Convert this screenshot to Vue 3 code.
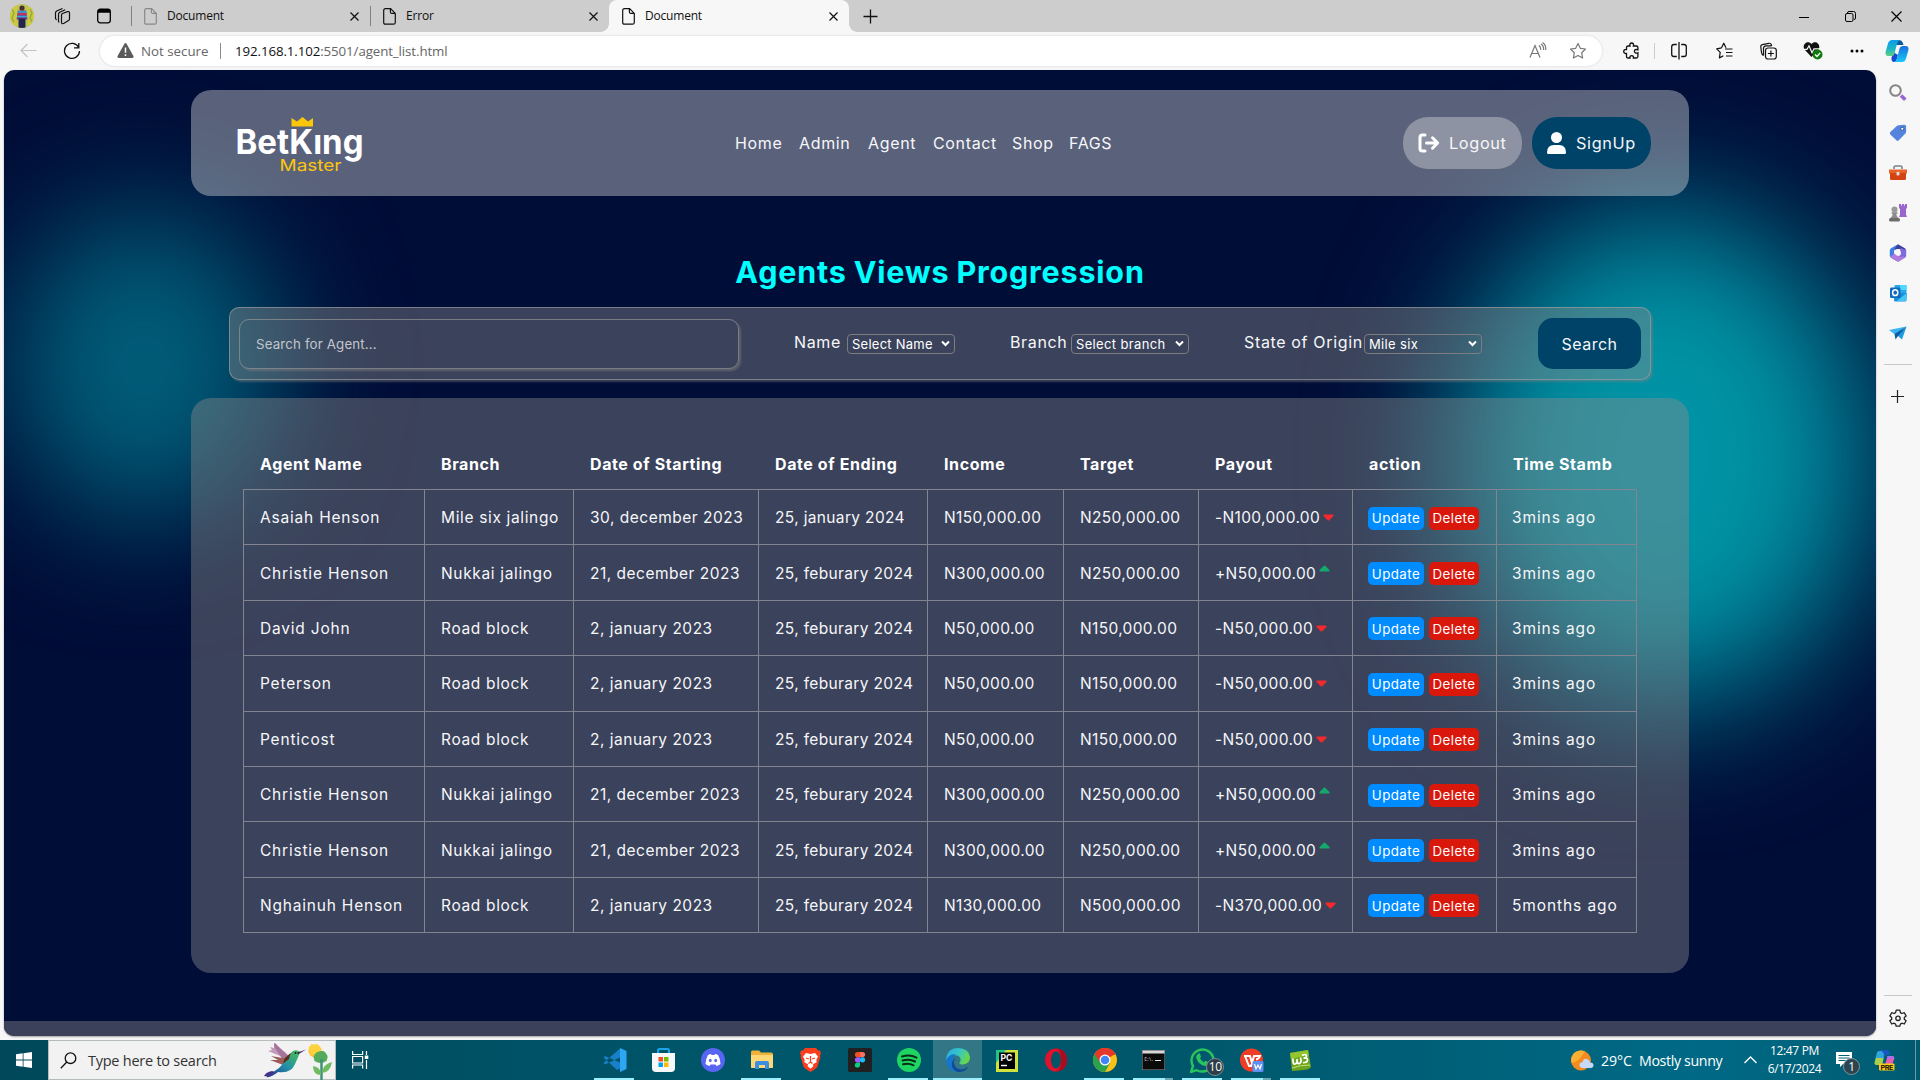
<script setup>
const tabs = [
  { title: 'Document', dim: true },
  { title: 'Error' },
  { title: 'Document', active: true },
]
const nav = [
  ['Home', 49], ['Admin', 54], ['Agent', 50], ['Contact', 64], ['Shop', 42], ['FAGS', 43],
]
const columns = ['Agent Name', 'Branch', 'Date of Starting', 'Date of Ending', 'Income', 'Target', 'Payout', 'action', 'Time Stamb']
const mk = (name, branch, start, end, income, target, payout, time) => ({ name, branch, start, end, income, target, payout, time, up: payout[0] === '+' })
const christie = () => mk('Christie Henson', 'Nukkai jalingo', '21, december 2023', '25, feburary 2024', 'N300,000.00', 'N250,000.00', '+N50,000.00', '3mins ago')
const road = (name) => mk(name, 'Road block', '2, january 2023', '25, feburary 2024', 'N50,000.00', 'N150,000.00', '-N50,000.00', '3mins ago')
const rows = [
  mk('Asaiah Henson', 'Mile six jalingo', '30, december 2023', '25, january 2024', 'N150,000.00', 'N250,000.00', '-N100,000.00', '3mins ago'),
  christie(),
  road('David John'),
  road('Peterson'),
  road('Penticost'),
  christie(),
  christie(),
  mk('Nghainuh Henson', 'Road block', '2, january 2023', '25, feburary 2024', 'N130,000.00', 'N500,000.00', '-N370,000.00', '5months ago'),
]
</script>

<template>
  <div class="screen">
    <header class="tabstrip">
      <div class="slot w44">
        <svg width="24" height="24" viewBox="0 0 24 24"><defs><clipPath id="av"><circle cx="12" cy="12" r="12" /></clipPath></defs><g clip-path="url(#av)"><rect width="24" height="24" fill="#b9c45c" /><path d="M0 0h7v24H0zM18 3h6v18h-6z" fill="#d0c93c" /><path d="M2 5l2 4-2 5 2 4M20 5l2 4-2 5 2 4" stroke="#8fae45" stroke-width="1.500" fill="none" /><circle cx="12" cy="4" r="2.600" fill="#4a2f2a" /><path d="M8 6.500h8l1.500 9h-11z" fill="#7a3b9c" /><path d="M7.500 8h9M7 12.500h10" stroke="#2bb0d8" stroke-width="1.500" /><path d="M7.500 10h9" stroke="#d8324b" stroke-width="1.500" /><path d="M8.500 14.500h7V24h-7z" fill="#24244c" /></g></svg>
      </div>
      <div class="slot w36">
        <svg width="17" height="17" viewBox="0 0 17 17" fill="none" stroke="#111" stroke-width="1.200"><path d="M7.500 7q0-1 1-1.500l5-1.900q2-.5 2 1.400v6q0 1-1 1.500l-4.500 2.800q-2.500 1.200-2.500-1z" /><path d="M5.200 14.500l-.7-1V6.500q0-1.500 1.200-2.200l5.500-2.600M2.600 12L1.500 10.500V5q0-1.300 1.200-2L8.500.500" /></svg>
      </div>
      <div class="slot w48">
        <svg width="14" height="16" viewBox="0 0 14 16"><rect x=".7" y="1.200" width="12.600" height="13.600" rx="2.500" fill="none" stroke="#000" stroke-width="1.300" /><path d="M1 4.800V3a2 2 0 012-2h8a2 2 0 012 2v1.800z" /></svg>
      </div>
      <div class="tabs">
        <div v-for="(t, i) in tabs" :key="i" class="tab" :class="{ active: t.active }">
          <svg width="13" height="17" viewBox="0 0 13 17" fill="none" :stroke="t.dim ? '#888' : '#111'" stroke-width="1.200"><path d="M.7 2.500Q.7.700 2.400.7h5.200l4.700 4.700v9q0 1.800-1.800 1.800H2.400Q.7 16.200.7 14.400zM7.400.7v3.200q0 1.500 1.500 1.500h3.400" /></svg>
          <span>{{ t.title }}</span>
          <svg class="x" width="9" height="9" viewBox="0 0 9 9" stroke="#111" stroke-width="1.200"><path d="M.5.500l8 8M8.500.500l-8 8" /></svg>
        </div>
      </div>
      <div class="slot w42"><svg width="15" height="15" viewBox="0 0 15 15" stroke="#111" stroke-width="1.300"><path d="M7.500.500v14M.5 7.500h14" /></svg></div>
      <div class="winbtns">
        <svg width="11" height="11" viewBox="0 0 11 11" stroke="#000" fill="none"><path d="M0 6.500h10" /></svg>
        <svg width="11" height="11" viewBox="0 0 11 11" stroke="#000" fill="none"><rect x=".5" y="2.500" width="7.500" height="8" rx="1.500" /><path d="M2.500 2q0-1.500 1.500-1.500h4.500q2 0 2 2v4.500q0 1.500-1.500 1.500" /></svg>
        <svg width="11" height="11" viewBox="0 0 11 11" stroke="#000" fill="none" stroke-width="1.200"><path d="M.5.500l10 10M10.500.500l-10 10" /></svg>
      </div>
    </header>

    <div class="toolbar">
      <div class="slot w56"><svg width="17" height="15" viewBox="0 0 17 15" fill="none" stroke="#c3c3c3" stroke-width="1.200"><path d="M16.500 7.500H1M7.500 1L1 7.500 7.500 14" /></svg></div>
      <div class="slot w32"><svg width="18" height="18" viewBox="0 0 18 18" fill="none" stroke="#111" stroke-width="1.300"><path d="M15.700 5.500A7.500 7.500 0 1016.500 9M15.800 1v4.800H11" /></svg></div>
      <div class="omni">
        <svg width="17" height="15" viewBox="0 0 17 15"><path d="M7.300 1Q8.500-.8 9.700 1l6.700 12q.7 1.700-1 2H1.600q-1.700-.3-1-2z" fill="#5a5a5a" /><path d="M8.500 4.500v5.300M8.500 11.200v1.700" stroke="#fff" stroke-width="1.500" /></svg>
        <span class="ns">Not secure</span><i class="vline"></i><span class="url"><b>192.168.1.102</b>:5501/agent_list.html</span>
        <div class="omni-icons">
          <svg width="18" height="17" viewBox="0 0 18 17" fill="none" stroke="#777" stroke-width="1.200"><path d="M1 15.500L6 3.500l5 12M2.800 11.500h6.500M10 3.500q2 1.500 1.800 4.500M12 2q3 2 2.600 6M13.500.600q3.700 2.500 3.300 7.400" /></svg>
          <svg width="18" height="18" viewBox="0 0 18 18" fill="none" stroke="#777" stroke-width="1.200"><path d="M9 1.500l2.300 4.800 5.200.7-3.800 3.700.9 5.300L9 13.500 4.400 16l.9-5.300L1.500 7l5.200-.7z" stroke-linejoin="round" /></svg>
        </div>
      </div>
      <div class="tools">
        <div class="slot t1"><svg width="17" height="18" viewBox="0 0 17 18" fill="none" stroke="#111" stroke-width="1.300"><path d="M3.500 5.500q0-1.500 1.500-1.500h2c-.7-2 .5-3 1.700-3s2.400 1 1.700 3h3q1.500 0 1.500 1.500v2.300c-2-.8-3.500 0-3.500 1.500s1.500 2.300 3.500 1.500v3.700q0 1.500-1.500 1.500h-3c.4-1.500-.5-2.300-1.700-2.300S6.600 14.500 7 16H5q-1.500 0-1.500-1.500v-3C1.700 11.800.7 10.600.7 9.400s1-2.200 2.800-1.900z" /></svg></div>
        <i class="vline g"></i>
        <div class="slot t2"><svg width="16" height="18" viewBox="0 0 16 18" fill="none" stroke="#111" stroke-width="1.300"><path d="M5.800 2.500H3Q.7 2.500.7 4.800v7.400q0 2.300 2.300 2.300h2.800M10.200 2.500H13q2.300 0 2.300 2.300v7.400q0 2.300-2.300 2.300h-2.800M8 0v17.500" /></svg></div>
        <div class="slot t3"><svg width="17" height="18" viewBox="0 0 17 18" fill="none" stroke="#111" stroke-width="1.200" stroke-linejoin="round"><path d="M10 5.800L7.800 1.200 5.500 5.800.7 6.800l3.500 3.600-.8 5.500 4-2.200M9 7h7.500M10 10.500h6.500M10 14h6.500" /></svg></div>
        <div class="slot t3"><svg width="17" height="18" viewBox="0 0 17 18" fill="none" stroke="#111" stroke-width="1.200"><rect x="5.500" y="6" width="10.800" height="11" rx="2.500" /><path d="M10.900 8.500v6M7.900 11.500h6M3.500 13.500Q1.800 12.500 1.500 10.500L.8 5Q.6 3 2.300 2.700l6.500-1.400q2-.3 2.600 1.500l.3 1M3.500 13.500V6.500q0-2.500 2.500-2.700h5.500" /></svg></div>
        <div class="slot t3"><svg width="20" height="19" viewBox="0 0 20 19"><path d="M8.500 16L1.500 8.500C-1.500 4 4.500-1.500 8.500 3c4-4.500 10 1 7 5.500z" fill="#111" /><path d="M0 8.300h4l2-3.500 3 7 2-4h6" stroke="#f7f7f7" stroke-width="1.200" fill="none" /><circle cx="14.500" cy="13.500" r="5" fill="#0f7b0f" /><path d="M12 13.500l2 2 3.200-3.600" stroke="#fff" stroke-width="1.300" fill="none" /></svg></div>
        <div class="slot t3 dots"><svg width="14" height="4" viewBox="0 0 14 4"><circle cx="2" cy="2" r="1.500" /><circle cx="7" cy="2" r="1.500" /><circle cx="12" cy="2" r="1.500" /></svg></div>
        <div class="slot t4">
          <svg width="24" height="24" viewBox="0 0 24 24"><defs><linearGradient id="cpa" x1="0" y1="0" x2="0" y2="1"><stop offset="0" stop-color="#0a9de8" /><stop offset=".55" stop-color="#1bb5c9" /><stop offset="1" stop-color="#5ed27c" /></linearGradient><linearGradient id="cpb" x1="0" y1="0" x2="0" y2="1"><stop offset="0" stop-color="#1f6fdc" /><stop offset="1" stop-color="#14c8f7" /></linearGradient></defs><path d="M14 1q3 0 3.700 2.500l.8 2.500h-8l2-4z" fill="#0b5a9c" /><path d="M6.500 19L8 13l5 3-1.500 5q-.7 2.500-3 2T6.500 19z" fill="#164ad0" /><path d="M7 1h8q-2 0-2.800 3L9.500 14.500Q9 17 6.500 17H3.500Q-.3 17 .7 12.500L3 4.500Q4 1 7 1z" fill="url(#cpa)" /><path d="M17 23H9q2 0 2.800-3l2.700-10.500Q15 7 17.500 7h3q3.800 0 2.800 4.500L21 19.500q-1 3.500-4 3.500z" fill="url(#cpb)" /></svg>
        </div>
      </div>
    </div>

    <div class="body">
      <main class="page">
        <div class="glow left"></div>
        <div class="glow right"></div>

        <section class="topbar">
          <svg class="logo" width="140" height="66" viewBox="0 0 140 66">
            <path d="M59.500 9l5.500 3.500 5.500-4.500 5.500 4.500 5-3.500v8.500H59.500z" fill="#fdc60b" />
            <text x="3.500" y="45" textLength="128" lengthAdjust="spacingAndGlyphs" class="lg">BetKıng</text>
            <text x="47.500" y="61.500" textLength="62" lengthAdjust="spacingAndGlyphs" class="ms">Master</text>
          </svg>
          <nav><a v-for="n in nav" :key="n[0]" :style="{ width: n[1] + 'px' }">{{ n[0] }}</a></nav>
          <div class="auth">
            <button class="logout"><svg width="22" height="20" viewBox="0 0 22 20" fill="none" stroke="#fff" stroke-width="3" stroke-linecap="round" stroke-linejoin="round"><path d="M7 2H4.500Q2 2 2 4.500v11Q2 18 4.500 18H7M8.500 10h11M14.500 4.800l5.200 5.200-5.200 5.200" /></svg>Logout</button>
            <button class="signup"><svg width="19" height="22" viewBox="0 0 19 22" fill="#fff"><circle cx="9.500" cy="5.500" r="5.500" /><path d="M0 20.500Q0 13 7 13h5q7 0 7 7.500 0 1.500-1.500 1.500h-16Q0 22 0 20.500z" /></svg>SignUp</button>
          </div>
        </section>

        <h1>Agents Views Progression</h1>

        <section class="searchbar">
          <div class="input">Search for Agent...</div>
          <div class="field f1"><label>Name</label><div class="select">Select Name<svg width="9" height="7" viewBox="0 0 9 7"><path d="M1 1.500l3.500 3.500L8 1.500" fill="none" stroke="#fff" stroke-width="2" /></svg></div></div>
          <div class="field f2"><label>Branch</label><div class="select">Select branch<svg width="9" height="7" viewBox="0 0 9 7"><path d="M1 1.500l3.500 3.500L8 1.500" fill="none" stroke="#fff" stroke-width="2" /></svg></div></div>
          <div class="field f3"><label>State of Origin</label><div class="select">Mile six<svg width="9" height="7" viewBox="0 0 9 7"><path d="M1 1.500l3.500 3.500L8 1.500" fill="none" stroke="#fff" stroke-width="2" /></svg></div></div>
          <button class="go">Search</button>
        </section>

        <section class="panel">
          <div class="row head"><div v-for="c in columns" :key="c">{{ c }}</div></div>
          <div class="table">
            <div v-for="(r, i) in rows" :key="i" class="row">
              <div class="nm">{{ r.name }}</div>
              <div class="br">{{ r.branch }}</div>
              <div class="ds">{{ r.start }}</div>
              <div>{{ r.end }}</div>
              <div>{{ r.income }}</div>
              <div>{{ r.target }}</div>
              <div>{{ r.payout }}<svg :class="{ up: r.up }" width="11" height="7" viewBox="0 0 11 7"><path v-if="r.up" d="M5.500.500q.5 0 1 .5l4 4q.5 1.500-.7 1.500H1.200Q0 6.500.5 5l4-4q.5-.5 1-.5z" fill="#15a86c" /><path v-else d="M5.500 6.500q-.5 0-1-.5l-4-4Q0 .5 1.200.500h8.600q1.200 0 .7 1.500l-4 4q-.5.5-1 .5z" fill="#f5282d" /></svg></div>
              <div class="acts"><span class="upd">Update</span><span class="del">Delete</span></div>
              <div class="tm">{{ r.time }}</div>
            </div>
          </div>
        </section>
        <div class="pagefoot"></div>
      </main>

      <aside class="side">
        <div class="slot s"><svg width="18" height="18" viewBox="0 0 18 18" fill="none"><circle cx="6.500" cy="6.500" r="5.300" stroke="#858585" stroke-width="2" /><path d="M12 11.500l4.300 4.300" stroke="#9a63d2" stroke-width="3.600" /></svg></div>
        <div class="slot s"><svg width="18" height="18" viewBox="0 0 18 18"><path d="M9.500 1.200l6-.4q1.600 0 1.600 1.600v5.400q0 1-.7 1.700l-6.600 6.800q-1.200 1.200-2.400 0L1.300 10.500q-1-1.200 0-2.400l6.500-6.200q.7-.7 1.700-.7z" fill="#5584dc" /><circle cx="13.300" cy="4.800" r="1.600" fill="#fff" stroke="#274b92" stroke-width=".9" /></svg></div>
        <div class="slot s"><svg width="18" height="16" viewBox="0 0 18 16"><path d="M5 4V2.500Q5 1 6.500 1h5Q13 1 13 2.500V4" fill="none" stroke="#7b8288" stroke-width="1.600" /><path d="M0 4.500h18v4H0z" fill="#e8622a" /><path d="M1 8h16v5.500Q17 15 15.500 15h-13Q1 15 1 13.500z" fill="#d44413" /><rect x="7.500" y="6.800" width="3" height="3.800" rx="1" fill="#d9dee2" /></svg></div>
        <div class="slot s"><svg width="18" height="18" viewBox="0 0 18 18"><path d="M10 0h2v1.500h1V0h2v1.500h1V0h2v4l-1 1v5.500l1 2.500h-8l1-2.500V5l-1-1z" fill="#9b66cc" /><circle cx="5.500" cy="5.500" r="3" fill="#9a9a9a" /><path d="M2.500 8.300h6v1.500H7.300q0 2.700 2.200 4.200h-8q2.200-1.500 2.200-4.200H2.500z" fill="#8b8b8b" /><rect y="14" width="11" height="3.500" rx="1.500" fill="#6d6d6d" /></svg></div>
        <div class="slot s"><svg width="18" height="18" viewBox="0 0 18 18"><path d="M8.500.500L2 4.300Q.8 5 .8 6.500v5q0 1.500 1.200 2.200l3 1.500V6.500L12 3z" fill="#3e7fe0" /><path d="M9 .300l6.500 3.800Q17 5 17 6.500v4L11.500 7.500V5L5.500 5z" fill="#3f3fa0" /><path d="M17.200 6v5.500q0 1.500-1.200 2.200l-6 3.600q-1 .6-2 0L3 14.500l8.500-3.500V4z" fill="#7d6cdd" /><path d="M1.200 12.800L5.500 9.500l5.500 3.300 5.500-.3-6.500 4.800q-1 .6-2 0z" fill="#b07bdc" /><circle cx="9" cy="8.800" r="2.900" fill="#f7f7f7" /></svg></div>
        <div class="slot s"><svg width="17" height="18" viewBox="0 0 17 18"><rect x="4.500" y="1" width="12" height="12" rx="1" fill="#28a8ea" /><path d="M10 1h6.500v5H10z" fill="#50d9ff" /><path d="M4 9l12.500 0v7q0 1.500-1.500 1.500H5.500Q4 17.500 4 16z" fill="#1490df" /><path d="M16.500 9L7 17h8q1.500 0 1.500-1.500z" fill="#43c6f5" /><rect x="0" y="3.500" width="10.500" height="10.500" rx="1.200" fill="#0f6cbd" /><ellipse cx="5.200" cy="8.700" rx="2.600" ry="2.900" fill="none" stroke="#fff" stroke-width="1.500" /></svg></div>
        <div class="slot s"><svg width="18" height="15" viewBox="0 0 18 15"><path d="M0 4L17.500.500 6 8.500z" fill="#35b4f0" /><path d="M17.500.500L13 13.500 8.500 9.500z" fill="#1b9be6" /><path d="M17.500.500L5.500 8l1 5.500 2.500-3.500z" fill="#0d5d9e" /></svg></div>
        <i class="hline"></i>
        <div class="slot add"><svg width="13" height="13" viewBox="0 0 13 13" stroke="#222" stroke-width="1.200"><path d="M6.500 0v13M0 6.500h13" /></svg></div>
        <i class="hline low"></i>
        <div class="slot gear"><svg width="18" height="18" viewBox="0 0 18 18" fill="none" stroke="#222" stroke-width="1.300"><path d="M7.200 1.200h3.600l.6 2.400 1.500.9 2.400-.8 1.800 3.200-1.800 1.600v1.700l1.800 1.600-1.800 3.200-2.400-.8-1.500.9-.6 2.100H7.200l-.6-2.100-1.500-.9-2.400.8L.9 11.800l1.800-1.600V8.500L.9 6.900l1.800-3.200 2.400.8 1.500-.9z" stroke-linejoin="round" /><circle cx="9" cy="9.300" r="2.200" /></svg></div>
      </aside>
    </div>

    <footer class="taskbar">
      <div class="slot start"><svg width="16" height="16" viewBox="0 0 16 16" fill="#fff"><path d="M0 2.300L6.700 1.300v6.300H0zM7.500 1.200L16 0v7.600H7.500zM0 8.400h6.700v6.300L0 13.700zM7.500 8.400H16V16l-8.500-1.200z" /></svg></div>
      <div class="wsearch">
        <svg width="17" height="17" viewBox="0 0 17 17" fill="none" stroke="#111" stroke-width="1.300"><circle cx="10.500" cy="6.200" r="5.300" /><path d="M6.800 10L.8 16.200" /></svg>
        <span>Type here to search</span>
        <svg class="bird" width="72" height="38" viewBox="0 0 72 38">
          <defs><linearGradient id="bd" x1="1" y1="0" x2="0" y2="1"><stop offset="0" stop-color="#4fc04d" /><stop offset=".5" stop-color="#2291a8" /><stop offset="1" stop-color="#2b2c8c" /></linearGradient></defs>
          <path d="M27 18L5 9l4-1-2-3 4 1 0-4 11 8 8 8z" fill="#c29ab9" /><path d="M29 18L12 1q-2 0 0 5l8 12z" fill="#a5739c" /><path d="M20 23l-13-5 8 0-7-4 18 3z" fill="#9a5d5a" /><path d="M30 10q-10 4-10 14l10-6z" fill="#5a2f18" />
          <path d="M37 10q-3-3-7-1-3 2-4 8-6 4-10 9L3 35q5 1 12-5 13 2 17-8 3-6 5-12z" fill="url(#bd)" /><path d="M1 34q2-4 8-5l3 1q-6 5-11 4z" fill="#45318c" /><path d="M34 10.500q4-1 9-3l-8 5z" fill="#42246b" /><circle cx="32.500" cy="11" r="1" fill="#14242a" />
          <circle cx="52" cy="9" r="6.500" fill="#fbc22d" /><path d="M45.500 6l3-4 3 1 3-1 4 5-2 4-8 2z" fill="#ffd13b" /><path d="M50.500 15q2-7 10-6 6 4 3 10-6 4-12 0z" fill="#55ab5c" /><path d="M58.500 17v21" stroke="#3f9278" stroke-width="2.500" /><path d="M58 33q-8 0-8-9 8 1 8 9zM59 31q8 0 10-11-9 2-10 11z" fill="#71bb62" />
        </svg>
      </div>
      <div class="slot tv"><svg width="17" height="18" viewBox="0 0 17 18" fill="none" stroke="#fff" stroke-width="1.200"><path d="M.6 0v3.500h10V0M.6 17.500V14h10v3.500M.6 5.500h10v6.500H.6zM14.500 0v4M14.500 9v9" /><path d="M12.800 4.500h3.500V8h-3.500z" fill="#fff" stroke="none" /></svg></div>

      <div class="apps">
        <div class="app run"><svg width="24" height="24" viewBox="0 0 24 24"><path d="M2 8L.5 9.500 14 22l4-2V15zM2 16.500L.5 15 17 .5l1 8.500z" fill="#1780c8" /><path d="M17 0l6.500 3v18L17 24z" fill="#2ca7f3" /></svg></div>
        <div class="app"><svg width="23" height="24" viewBox="0 0 23 24"><path d="M6 6V2.500Q6 1 7.500 1h8Q17 1 17 2.500V6" fill="none" stroke="#1aa5e8" stroke-width="2" /><path d="M0 5h23v15q0 4-4 4H4q-4 0-4-4z" fill="#f7f8fa" /><path d="M6.500 9h4.500v4.500H6.500z" fill="#f25022" /><path d="M12 9h4.500v4.500H12z" fill="#7fba00" /><path d="M6.500 14.500h4.500V19H6.500z" fill="#00a4ef" /><path d="M12 14.500h4.500V19H12z" fill="#ffb900" /></svg></div>
        <div class="app"><svg width="24" height="24" viewBox="0 0 24 24"><circle cx="12" cy="12" r="12" fill="#5865f2" /><path d="M7 7q2-1 3-1l.5 1h3l.5-1q1 0 3 1 2.500 4 2.500 9-2 1.700-4 2l-1-1.500H9.500L8.500 18q-2-.3-4-2Q4.500 11 7 7z" fill="#fff" /><ellipse cx="9.300" cy="12.500" rx="1.400" ry="1.700" fill="#5865f2" /><ellipse cx="14.700" cy="12.500" rx="1.400" ry="1.700" fill="#5865f2" /></svg></div>
        <div class="app run"><svg width="22" height="20" viewBox="0 0 22 20"><path d="M0 2q0-1.500 1.500-1.500H8l2 2h10q2 0 2 1.500v13q0 1-1 1H1q-1 0-1-1z" fill="#f0b03a" /><path d="M0 5h22v12q0 1-1 1H1q-1 0-1-1z" fill="#ffd775" /><path d="M4 19v-6q0-2 2-2h10q2 0 2 2v6h-4v-4H8v4z" fill="#3b8ee0" /></svg></div>
        <div class="app"><svg width="21" height="24" viewBox="0 0 21 24"><path d="M5 0h11l2 2.500h2l1 3-1 2 .5 1-3 10Q17 20 10.500 24 4 20 3.500 18.500L.5 8.500l.5-1-1-2 1-3h2z" fill="#fb3c1d" /><path d="M6 5l4.500 1L15 5l3 3.500-1.800 3.500.6 2-4 2.500.7 1.500-3 2.700-3-2.700.7-1.500-4-2.500.6-2L3 8.500z" fill="#fff" /><path d="M6 10l3 1M15 10l-3 1M10.500 8v6l-2 1.500M10.500 14l2 1.500" stroke="#fb3c1d" stroke-width="1.300" fill="none" /></svg></div>
        <div class="app"><svg width="24" height="24" viewBox="0 0 24 24"><rect width="24" height="24" rx="1.500" fill="#202020" /><path d="M12 4H9.500a2.600 2.600 0 000 5.200H12z" fill="#f24e1e" /><path d="M12 4h2.500a2.600 2.600 0 010 5.200H12z" fill="#ff7262" /><path d="M12 9.200H9.500a2.600 2.600 0 000 5.200H12z" fill="#a259ff" /><circle cx="14.500" cy="11.800" r="2.600" fill="#1abcfe" /><path d="M12 14.400H9.500A2.600 2.600 0 1012 17z" fill="#0acf83" /></svg></div>
        <div class="app run"><svg width="24" height="24" viewBox="0 0 24 24"><circle cx="12" cy="12" r="12" fill="#1fd562" /><path d="M5 8.500q8-2.500 14.500 1.200M5.500 12.500q7-2 12.500 1M6 16.300q6-1.500 10.500 1" fill="none" stroke="#0b2c16" stroke-width="2" stroke-linecap="round" /></svg></div>
        <div class="app run cur"><svg width="24" height="24" viewBox="0 0 24 24"><defs><linearGradient id="eg" x1="0" y1="0" x2="1" y2=".4"><stop offset="0" stop-color="#29a9dd" /><stop offset=".55" stop-color="#36c5c9" /><stop offset="1" stop-color="#66d84c" /></linearGradient></defs><path d="M0 12Q1 0 12 0q11 .5 12 9 0 7-7 7.500-4 0-3.500-2 2-2 .5-5Q10 4 0 12z" fill="url(#eg)" /><path d="M0 12Q4 5 10 6.500q-4 2-3 9 2 7 13 5-4 4-9 3.500Q.5 22.500 0 12z" fill="#1576cf" /><path d="M9.500 10q-4 5 1 10 5 3.500 12-1.500-3.500 6-11 5.500Q5 21 6 15q1-4 3.500-5z" fill="#114b93" /></svg></div>
        <div class="app"><svg width="22" height="23" viewBox="0 0 22 23"><path d="M0 1h22v22H0z" fill="#cfe33c" /><path d="M0 1h10L0 14z" fill="#21c58a" /><path d="M3 3.500h16v16.500H3z" fill="#000" /><text x="4.500" y="11.500" textLength="12" lengthAdjust="spacingAndGlyphs" class="pc">PC</text><path d="M5 16.500h6" stroke="#fff" stroke-width="1.400" /></svg></div>
        <div class="app"><svg width="24" height="24" viewBox="0 0 24 24"><ellipse cx="12" cy="12" rx="11" ry="11.500" fill="#e0122c" /><ellipse cx="12" cy="12" rx="5" ry="8.500" fill="#035466" /><path d="M12 .5q11 1 11 11.500T12 23.500q5-1 5-11.500T12 .5z" fill="#a90c20" /></svg></div>
        <div class="app run"><svg width="24" height="24" viewBox="0 0 24 24"><circle cx="12" cy="12" r="12" fill="#fbc116" /><path d="M12 12L1.600 6A12 12 0 0122.400 6z" fill="#e5382b" /><path d="M12 12L1.600 6A12 12 0 0012 24l5-9z" fill="#2ba24c" /><path d="M12 6.500h10.700A12 12 0 0012 .01 12 12 0 001.600 6L7 14.500z" fill="#e5382b" /><circle cx="12" cy="12" r="5.500" fill="#fff" /><circle cx="12" cy="12" r="4.300" fill="#4285f4" /></svg></div>
        <div class="app run multi"><svg width="23" height="20" viewBox="0 0 23 20"><path d="M0 0h23v20H0z" fill="#0b0b0b" stroke="#999" /><path d="M.5.500h22v3H.5z" fill="#d8d8d8" /><text x="2.500" y="11" textLength="9" lengthAdjust="spacingAndGlyphs" class="cm">C:\.</text><path d="M13 10.500h6" stroke="#eee" /></svg></div>
        <div class="app run wa"><svg width="26" height="25" viewBox="0 0 26 25"><path d="M1 24l2-6A11 11 0 1112 23.500a12 12 0 01-5.500-1.300z" fill="none" stroke="#29c45c" stroke-width="2.400" /><path d="M8 6q1.500-1.500 2 0l1 2.500q0 .8-1 1.700 1.500 2.800 4 4 1.300-1.700 2-1.300l2.500 1.300q0 3.500-3.500 3.800-7-1-9-9Q6.500 7 8 6z" fill="#29c45c" /></svg><span>10</span></div>
        <div class="app run multi"><svg width="24" height="24" viewBox="0 0 24 24"><circle cx="11.500" cy="12" r="11.500" fill="#f03d25" /><path d="M4 8h6l2 7 2-7h6q-1 3-4 3.500M5 8l4 10h2l2-6" fill="none" stroke="#fff" stroke-width="2" /><rect x="12.500" y="13" width="11" height="11" rx="1.500" fill="#5b8ff0" /><path d="M14.500 16l1.500 5 2-4 2 4 1.500-5" fill="none" stroke="#fff" stroke-width="1.200" /></svg></div>
        <div class="app run"><svg width="21" height="21" viewBox="0 0 21 21"><path d="M0 3l18-3 3 17q-2 3-8 3L2 21z" fill="#6fa51c" /><path d="M0 3l18-3 .8 5L1 9z" fill="#93c52c" /><path d="M3 8.500q-.5 6 2 5.500t2-5q0 5.500 2.500 4.500t1-6M12 5.500q4-2 4.500 0t-3 2.700q4-.5 4 1.500 0 3-4.500 3" fill="none" stroke="#fff" stroke-width="1.700" /><path d="M2 18q8-3 18-3" stroke="#c6e07a" fill="none" /></svg></div>
      </div>

      <div class="tray">
        <svg class="sun" width="23" height="21" viewBox="0 0 23 21"><circle cx="10" cy="10.500" r="10" fill="#f58a1f" /><path d="M0 10.500A10 10 0 0114 1.300Q8 12 .5 13z" fill="#fbb034" /><path d="M11.500 18q-3-.5-3-3t3-2.700Q12.500 8 16 9q2.500.5 3 3.500 3.500.2 3.500 2.700T19.500 18z" fill="#c5d9f8" /></svg>
        <span class="deg">29°C</span><span class="ms2">Mostly sunny</span>
        <svg class="chev" width="13" height="8" viewBox="0 0 13 8" fill="none" stroke="#fff" stroke-width="1.300"><path d="M.5 7l6-6 6 6" /></svg>
        <div class="clock"><span>12:47 PM</span><span>6/17/2024</span></div>
        <div class="note"><svg width="16" height="16" viewBox="0 0 16 16"><path d="M0 0h16v12H7l-3 3v-3H0z" fill="#fff" /><path d="M2.500 3.500h11M2.500 6h11M2.500 8.500h7" stroke="#046079" /></svg><span>1</span></div>
        <svg class="cop" width="21" height="21" viewBox="0 0 21 21"><path d="M5 1h7L8 15H3q-3 0-2.300-3L2.500 4Q3 1 5 1z" fill="#2fa6dc" /><path d="M2 8l7.500 0L8 15H3q-3 0-2.300-3z" fill="#a9cf4a" /><path d="M6 0h7q2 0 2.500 2.500L16 5h-4L9.500 9 10 4Q9 2 6 0z" fill="#1b57c3" /><path d="M13.500 6h4.500q3 0 2 3.500L18 15h-7z" fill="#e45cb4" /><path d="M13.500 6h4.500q2.500 0 2.200 2.500h-7.400z" fill="#a274e8" /><rect x="5" y="13.500" width="15.500" height="7" rx="1" fill="#fdca12" /><text x="6.500" y="19.500" textLength="12.500" lengthAdjust="spacingAndGlyphs" class="pre">PRE</text></svg>
        <i class="peek"></i>
      </div>
    </footer>
  </div>
</template>

<style>
html, body { margin: 0; overflow: hidden; }
</style>

<style scoped>
* { box-sizing: border-box; }
.screen { width: 1920px; height: 1080px; display: flex; flex-direction: column; background: #f7f7f7; font-family: "Open Sans", "Noto Sans", sans-serif; overflow: hidden; }
svg { display: block; flex: none; }
.slot { display: flex; align-items: center; justify-content: center; flex: none; }

.tabstrip { height: 32px; background: #cdcdcd; display: flex; align-items: center; flex: none; }
.w44 { width: 44px; } .w36 { width: 36px; } .w48 { width: 48px; }
.w42 { width: 42px; } .w56 { width: 56px; } .w32 { width: 32px; }
.tabs { display: flex; height: 32px; margin-left: 3px; }
.tab { width: 239px; height: 32px; display: flex; align-items: center; padding: 0 11px 0 13px; font-size: 12px; letter-spacing: -.2px; color: #111; position: relative; }
.tab:not(.active)::before { content: ""; position: absolute; left: 0; top: 6px; width: 1px; height: 20px; background: #808080; }
.tab span { margin: -1px 0 0 10px; flex: 1; }
.tab.active { background: #f7f7f7; border-radius: 8px 8px 0 0; width: 240px; }
.tab.active::before, .tab.active::after { content: ""; position: absolute; bottom: 0; width: 8px; height: 8px; }
.tab.active::before { left: -8px; background: radial-gradient(circle at 0 0, transparent 7.5px, #f7f7f7 8px); }
.tab.active::after { right: -8px; background: radial-gradient(circle at 100% 0, transparent 7.5px, #f7f7f7 8px); }
.winbtns { margin-left: auto; display: flex; gap: 35px; padding-right: 18px; }

.toolbar { height: 38px; display: flex; align-items: center; flex: none; padding-bottom: 1px; }
.toolbar > .w32 { margin-right: 12px; }
.omni { width: 1502px; height: 30px; background: #fff; border-radius: 15px; box-shadow: 0 0 3px rgba(0,0,0,.14); display: flex; align-items: center; padding-left: 17px; font-size: 13.300px; color: #666; }
.ns { margin-left: 7px; width: 68px; white-space: nowrap; }
.vline { width: 1px; height: 16px; background: #8b8b8b; margin: 0 14px 0 11px; }
.url { letter-spacing: -.1px; }
.url b { color: #111; font-weight: 400; }
.omni-icons { margin-left: auto; display: flex; gap: 22px; padding-right: 15px; }
.tools { display: flex; align-items: center; }
.t1 { width: 52px; padding-left: 6px; } .vline.g { margin: 0; background: #ccc; } .t2 { width: 47px; } .t3 { width: 44.500px; } .t4 { width: 38px; }
.t3.dots { width: 42px; }

.body { flex: none; height: 970px; display: flex; }
.page { position: relative; width: 1872px; height: 966px; margin-left: 4px; border-radius: 10px; background: #000d37; overflow: hidden; font-family: Inter, "Open Sans", sans-serif; color: #fff; display: flex; flex-direction: column; box-shadow: 0 1px 2px rgba(0,0,0,.35); flex: none; }
.glow { position: absolute; border-radius: 50%; }
.glow.left { left: 5px; top: 140px; width: 270px; height: 310px; background: #005e79; filter: blur(62px); }
.glow.right { left: 1448px; top: 140px; width: 420px; height: 495px; background: #0093a5; filter: blur(68px); }
.topbar, h1, .searchbar, .panel, .pagefoot { position: relative; flex: none; }

.topbar { margin: 20px 187px 0; height: 106px; border-radius: 20px; background: rgba(225,225,225,.4); display: flex; align-items: center; padding: 0 38px 0 41px; }
.logo { margin-bottom: 2px; }
.lg { font: 700 34px Inter, sans-serif; fill: #fff; }
.ms { font: 400 16.500px Inter, sans-serif; fill: #fdc60b; }
nav { display: flex; gap: 15px; margin-left: 363px; }
nav a { font-size: 16px; font-weight: 400; white-space: nowrap; letter-spacing: .65px; color: #f6f7f9; }
.auth { margin-left: auto; display: flex; gap: 10px; }
button { border: 0; font-family: inherit; font-weight: 400; color: #f6f7f9; letter-spacing: .65px; }
.auth button { width: 119px; height: 52px; border-radius: 25px; font-size: 16.300px; display: flex; align-items: center; padding: 0 0 0 15px; gap: 9px; white-space: nowrap; }
.auth .signup { gap: 10px; }
.logout { background: #8d93a2; }
.signup, .go { background: #004368; }

h1 { margin: 57px 0 0; height: 38px; line-height: 38px; font-size: 30.500px; font-weight: 700; color: #0ff; text-align: center; letter-spacing: .8px; word-spacing: -1px; }

.searchbar { margin: 16px 225px 0; height: 73px; border: 1px solid rgba(160,160,160,.65); border-radius: 10px; background: rgba(140,140,140,.42); box-shadow: 2px 2px 2px rgba(128,128,128,.45); display: flex; align-items: center; padding-left: 9px; }
.input { width: 500px; height: 50px; margin-top: 1px; border: 1px solid rgba(150,150,150,.7); border-radius: 10px; box-shadow: 2px 2px 2px rgba(128,128,128,.5); font-size: 13.300px; letter-spacing: .15px; color: #c3c5cd; display: flex; align-items: center; padding-left: 16px; }
.field { display: flex; align-items: center; font-size: 16px; color: #f6f7f9; white-space: nowrap; letter-spacing: .65px; }
.field label { position: relative; top: -2px; flex: none; }
.f1 { margin-left: 55px; } .f1 label { width: 53px; } .f1 .select { width: 108px; letter-spacing: .25px; }
.f2 { margin-left: 55px; } .f2 label { width: 61px; } .f2 .select { width: 118px; }
.f3 { margin-left: 55px; } .f3 label { width: 120px; } .f3 .select { width: 118px; }
.select { height: 20px; border: 1px solid #7d7d80; border-radius: 4px; font-size: 13px; letter-spacing: .35px; display: flex; align-items: center; justify-content: space-between; padding: 0 4px; color: #fff; }
.go { width: 103px; height: 51px; border-radius: 15px; font-size: 16px; margin-left: 56px; padding: 0; letter-spacing: .5px; }

.panel { margin: 18px 187px 0; height: 575px; border-radius: 20px; background: rgba(140,140,140,.42); padding: 39px 0 0 52px; }
.row { display: grid; grid-template-columns: 181px 149px 185px 169px 136px 135px 154px 144px 140px; height: 55.400px; }
.row > div { display: flex; align-items: center; padding: 1px 0 0 16px; white-space: nowrap; border-right: 1px solid #82858f; border-bottom: 1px solid #82858f; font-size: 15.500px; font-weight: 400; letter-spacing: .35px; color: #f6f7f9; }
.row.head { height: 52px; }
.row.head > div { border: 0; padding-left: 17px; font-weight: 700; font-size: 16px; letter-spacing: .6px; color: #fff; }
.row > .nm { letter-spacing: .8px; }
.row > .br { letter-spacing: .65px; }
.row > .ds { letter-spacing: .5px; }
.row > .tm { letter-spacing: .9px; padding-left: 15px; }
.table { width: 1394px; border-top: 1px solid #82858f; border-left: 1px solid #82858f; }
.row svg { margin-left: 3px; } .row svg.up { margin-bottom: 9px; }
.row .acts { gap: 5px; padding: 2px 0 0 15px; }
.acts span { height: 23px; border-radius: 5px; font-size: 13.300px; display: flex; align-items: center; justify-content: center; letter-spacing: .45px; color: #fff; }
.upd { width: 56px; background: #008cff; } .del { width: 50px; background: #d9180b; }
.pagefoot { margin-top: auto; height: 15px; background: #3b405b; }

.side { width: 44px; display: flex; flex-direction: column; align-items: center; }
.s { height: 40px; width: 44px; } .s:first-child { margin-top: 3px; }
.hline { width: 28px; height: 1px; background: #c8c8c8; margin-top: 11px; flex: none; }
.add { height: 40px; margin: 11px 2px 0 0; }
.hline.low { margin-top: auto; }
.gear { height: 44px; }

.taskbar { height: 40px; flex: none; display: flex; align-items: center; background: linear-gradient(90deg, #00485a 0, #004f62 20%, #00566a 40%, #00566a 60%, #006985 88%, #006680 92%, #005a70 100%); color: #fff; }
.start { width: 48px; }
.wsearch { width: 288px; height: 40px; background: #f2f2f2; border: 1px solid #b5bcbe; display: flex; align-items: center; padding-left: 11px; color: #333; font-size: 14.500px; flex: none; letter-spacing: -.25px; }
.wsearch span { margin-left: 11px; width: 176px; white-space: nowrap; }
.bird { margin-top: 2px; }
.tv { width: 48px; }
.apps { display: flex; margin-left: 206px; }
.app { width: 49.030px; height: 40px; display: flex; align-items: center; justify-content: center; position: relative; flex: none; }
.app.run::after { content: ""; position: absolute; bottom: 0; left: 4px; width: 40px; height: 2px; background: #9eeffd; }
.app.cur { background: rgba(255,255,255,.2); } .app.cur::after { left: 0; width: 49px; }
.app.multi::after { background: linear-gradient(90deg, #9eeffd 32px, #69a7b3 32px); }
.pc { font: 700 9px Inter, sans-serif; fill: #fff; } .cm { font: 6px "Liberation Mono", monospace; fill: #fff; }
.wa span { position: absolute; left: 28px; top: 18px; width: 18px; height: 18px; border-radius: 50%; background: #2c3e47; border: 1px solid #7b8b92; font-size: 12px; line-height: 16px; text-align: center; letter-spacing: -.5px; }
.tray { margin-left: auto; display: flex; align-items: center; width: 349px; font-size: 14.200px; white-space: nowrap; letter-spacing: -.35px; }
.deg { margin-left: 7px; width: 38px; letter-spacing: -.1px; } .ms2 { width: 105px; }
.clock { width: 75px; display: flex; flex-direction: column; align-items: center; font-size: 12px; line-height: 18px; letter-spacing: -.35px; }
.note { position: relative; margin-left: 4px; width: 37px; }
.note span { position: absolute; left: 7px; top: 6px; width: 17px; height: 17px; border-radius: 50%; background: #2b4450; border: 1px solid #84959c; font-size: 12px; line-height: 15px; text-align: center; }
.cop { margin-left: 1px; }
.pre { font: 700 6px Inter, sans-serif; fill: #111; }
.peek { margin-left: auto; margin-right: 4px; width: 1px; height: 40px; background: #6a9aa8; }
</style>
